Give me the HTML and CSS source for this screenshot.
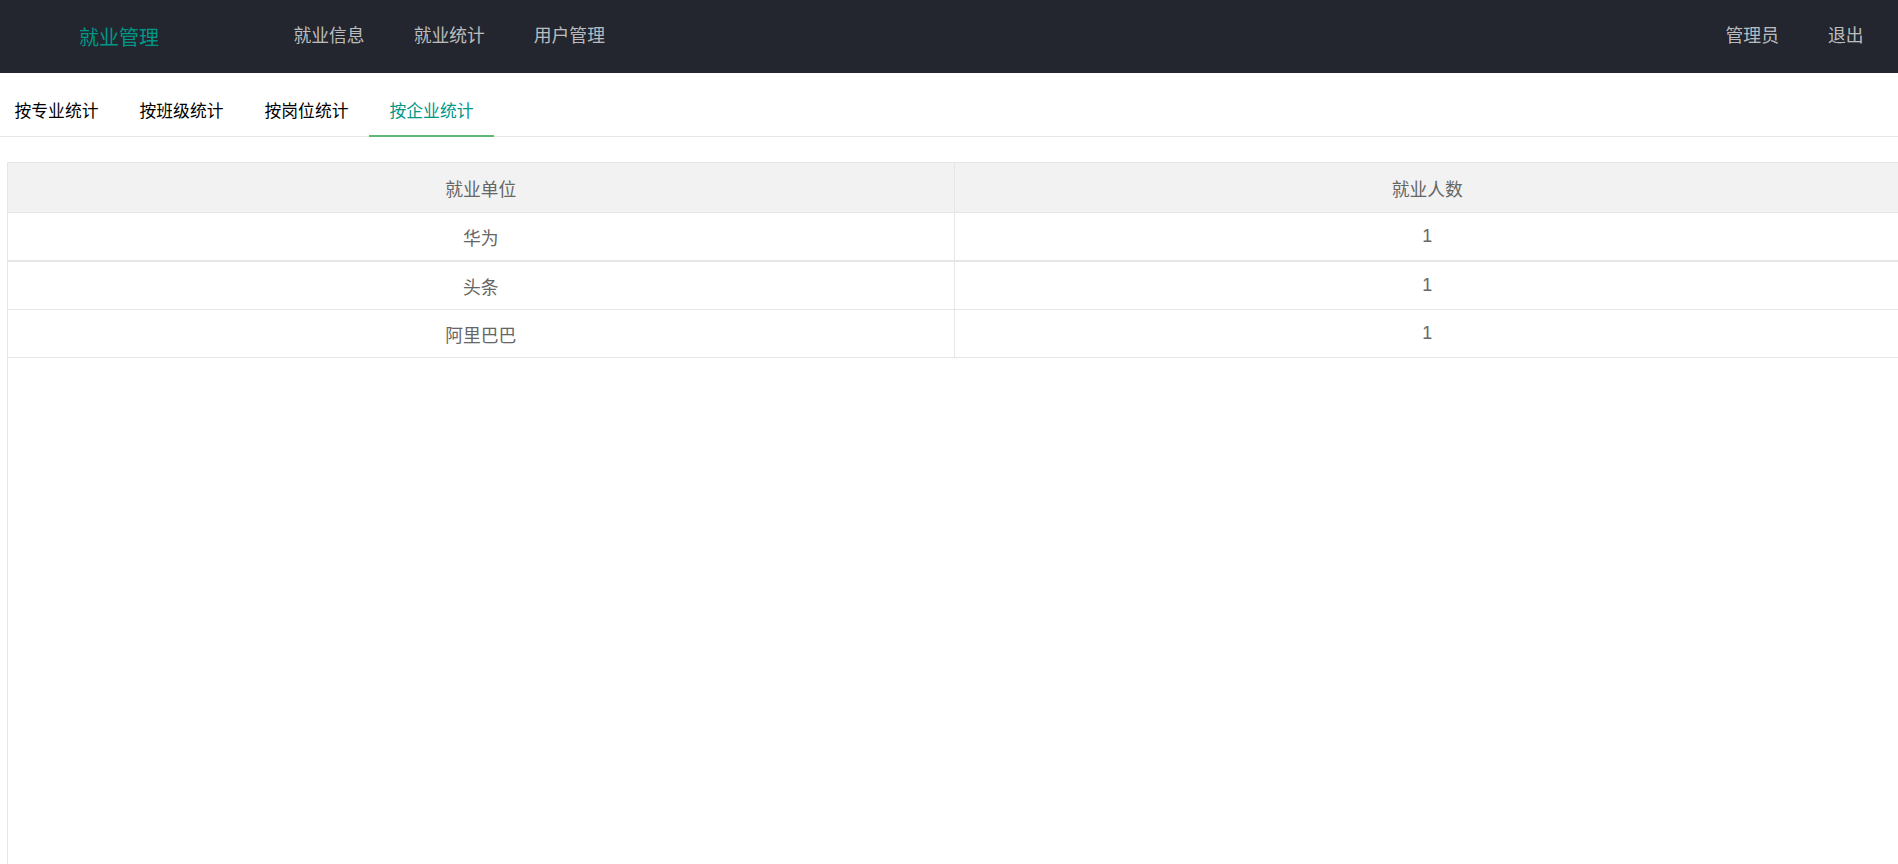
FILE: index.html
```html
<!DOCTYPE html>
<html lang="zh">
<head>
    <meta charset="UTF-8">
    <meta name="viewport" content="width=device-width, initial-scale=1.0">
    <title>就业管理</title>
    <link rel="stylesheet" href="styles.css">
</head>
<body>

    <!-- Header -->
    <div class="header">
        <div class="logo">就业管理</div>
        <ul class="nav nav-left">
            <li><a href="#">就业信息</a></li>
            <li><a href="#">就业统计</a></li>
            <li><a href="#">用户管理</a></li>
        </ul>
        <ul class="nav nav-right">
            <li><a href="#">管理员</a></li>
            <li><a href="#">退出</a></li>
        </ul>
    </div>

    <!-- Tabs -->
    <ul class="tab-title">
        <li>按专业统计</li>
        <li>按班级统计</li>
        <li>按岗位统计</li>
        <li class="active">按企业统计</li>
    </ul>

    <!-- Table -->
    <div class="table-view">
        <table class="stat-table">
            <thead>
                <tr>
                    <th>就业单位</th>
                    <th>就业人数</th>
                </tr>
            </thead>
            <tbody>
                <tr class="first">
                    <td>华为</td>
                    <td>1</td>
                </tr>
                <tr>
                    <td>头条</td>
                    <td>1</td>
                </tr>
                <tr>
                    <td>阿里巴巴</td>
                    <td>1</td>
                </tr>
            </tbody>
        </table>
    </div>

</body>
</html>
```

FILE: styles.css
```css
/* Base */
body {
    margin: 0;
    padding: 0;
    font-family: "Liberation Sans", "Noto Sans CJK SC", sans-serif;
    color: #333;
    background: #fff;
    overflow: hidden;
}

ul {
    list-style: none;
    margin: 0;
    padding: 0;
}

a {
    text-decoration: none;
}

/* Header */
.header {
    height: 73px;
    background-color: #23262e;
    display: flex;
    align-items: center;
}

.logo {
    width: 238px;
    text-align: center;
    color: #009688;
    font-size: 20px;
}

.nav {
    display: flex;
}

.nav li a {
    display: block;
    padding: 0 24.5px;
    line-height: 73px;
    font-size: 17.8px;
    color: rgba(255, 255, 255, 0.7);
}

.nav-left {
    padding-left: 31px;
}

.nav-right {
    margin-left: auto;
    padding-right: 10px;
}

/* Tabs */
.tab-title {
    display: flex;
    margin-top: 15px;
    margin-left: -6px;
    height: 48px;
    border-bottom: 1px solid #e6e6e6;
}

.tab-title li {
    position: relative;
    width: 125px;
    text-align: center;
    line-height: 48px;
    font-size: 16.8px;
    color: #000;
}

.tab-title li.active {
    color: #009688;
}

.tab-title li.active::after {
    content: "";
    position: absolute;
    left: 0;
    right: 0;
    bottom: -1px;
    height: 2px;
    background-color: #5fb878;
}

/* Table */
.table-view {
    margin: 25px 0 0 7px;
    width: 1892px;
    height: 720px;
    border: 1px solid #e6e6e6;
}

.stat-table {
    width: 100%;
    border-collapse: collapse;
    font-size: 17.8px;
    color: #666;
}

.stat-table th,
.stat-table td {
    width: 50%;
    text-align: center;
    font-weight: normal;
    border-bottom: 1px solid #e6e6e6;
    padding: 0;
}

.stat-table th + th,
.stat-table td + td {
    border-left: 1px solid #e6e6e6;
}

.stat-table th {
    height: 49px;
    background-color: #f2f2f2;
}

.stat-table td {
    height: 47px;
}

.stat-table tr.first td {
    border-bottom-width: 2px;
}
```
